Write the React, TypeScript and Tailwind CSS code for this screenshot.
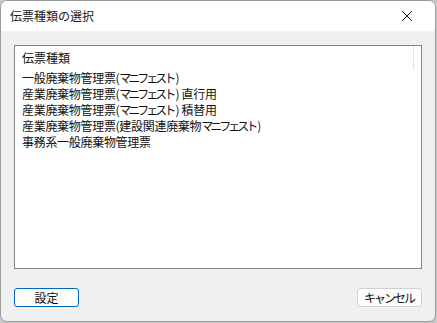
const items = [
  ["一般廃棄物管理票(", "マニフェスト", ")"],
  ["産業廃棄物管理票(", "マニフェスト", ") 直行用"],
  ["産業廃棄物管理票(", "マニフェスト", ") 積替用"],
  ["産業廃棄物管理票(建設関連廃棄物", "マニフェスト", ")"],
  ["事務系一般廃棄物管理票", "", ""],
];

const font = {
  fontFamily: '"Noto Sans CJK JP", "Noto Sans", sans-serif',
};

export default function App() {
  return (
    <div className="w-[437px] h-[323px] bg-[#c8c8c8]" style={font}>
      <div className="flex flex-col w-[436px] h-[322px] rounded-[7px] overflow-hidden border border-[#9a9a9a] bg-[#f0f0f0]">
        {/* title bar */}
        <div className="flex items-center justify-between h-[30px] bg-white pl-[9px] pr-[22px] shrink-0">
          <span className="text-[12px] text-[#222] leading-none">伝票種類の選択</span>
          <svg width="12" height="12" viewBox="0 0 12 12" className="text-[#1a1a1a]">
            <path d="M1 1L11 11M11 1L1 11" stroke="currentColor" strokeWidth="1" />
          </svg>
        </div>

        {/* body */}
        <div className="flex flex-col flex-1 px-[13px] pt-[14px] pb-[14px]">
          <div className="h-[224px] bg-white border border-[#838383] flex flex-col">
            <div className="flex items-center h-[24px] pl-[7px] mr-[7px] border-r border-[#e3e3e3] text-[12px] text-[#111]">
              伝票種類
            </div>
            <ul className="pl-[7px] text-[12px] text-[#111] tracking-[-0.3px]">
              {items.map(([a, kana, b]) => (
                <li key={a + b} className="h-[16px] leading-[16px] whitespace-nowrap">
                  {a}
                  <span className="tracking-[-3px] mr-[2px]">{kana}</span>
                  {b}
                </li>
              ))}
            </ul>
          </div>

          <div className="flex justify-between mt-[19px]">
            <button className="w-[65px] h-[19px] rounded-[3px] border border-[#0067c0] bg-[#fdfdfd] text-[12px] text-[#111] leading-none">
              設定
            </button>
            <button className="w-[65px] h-[19px] rounded-[3px] border border-[#d0d0d0] bg-[#fdfdfd] text-[12px] text-[#111] leading-none tracking-[-2px] pr-[1px]">
              キャンセル
            </button>
          </div>
        </div>
      </div>
    </div>
  );
}
